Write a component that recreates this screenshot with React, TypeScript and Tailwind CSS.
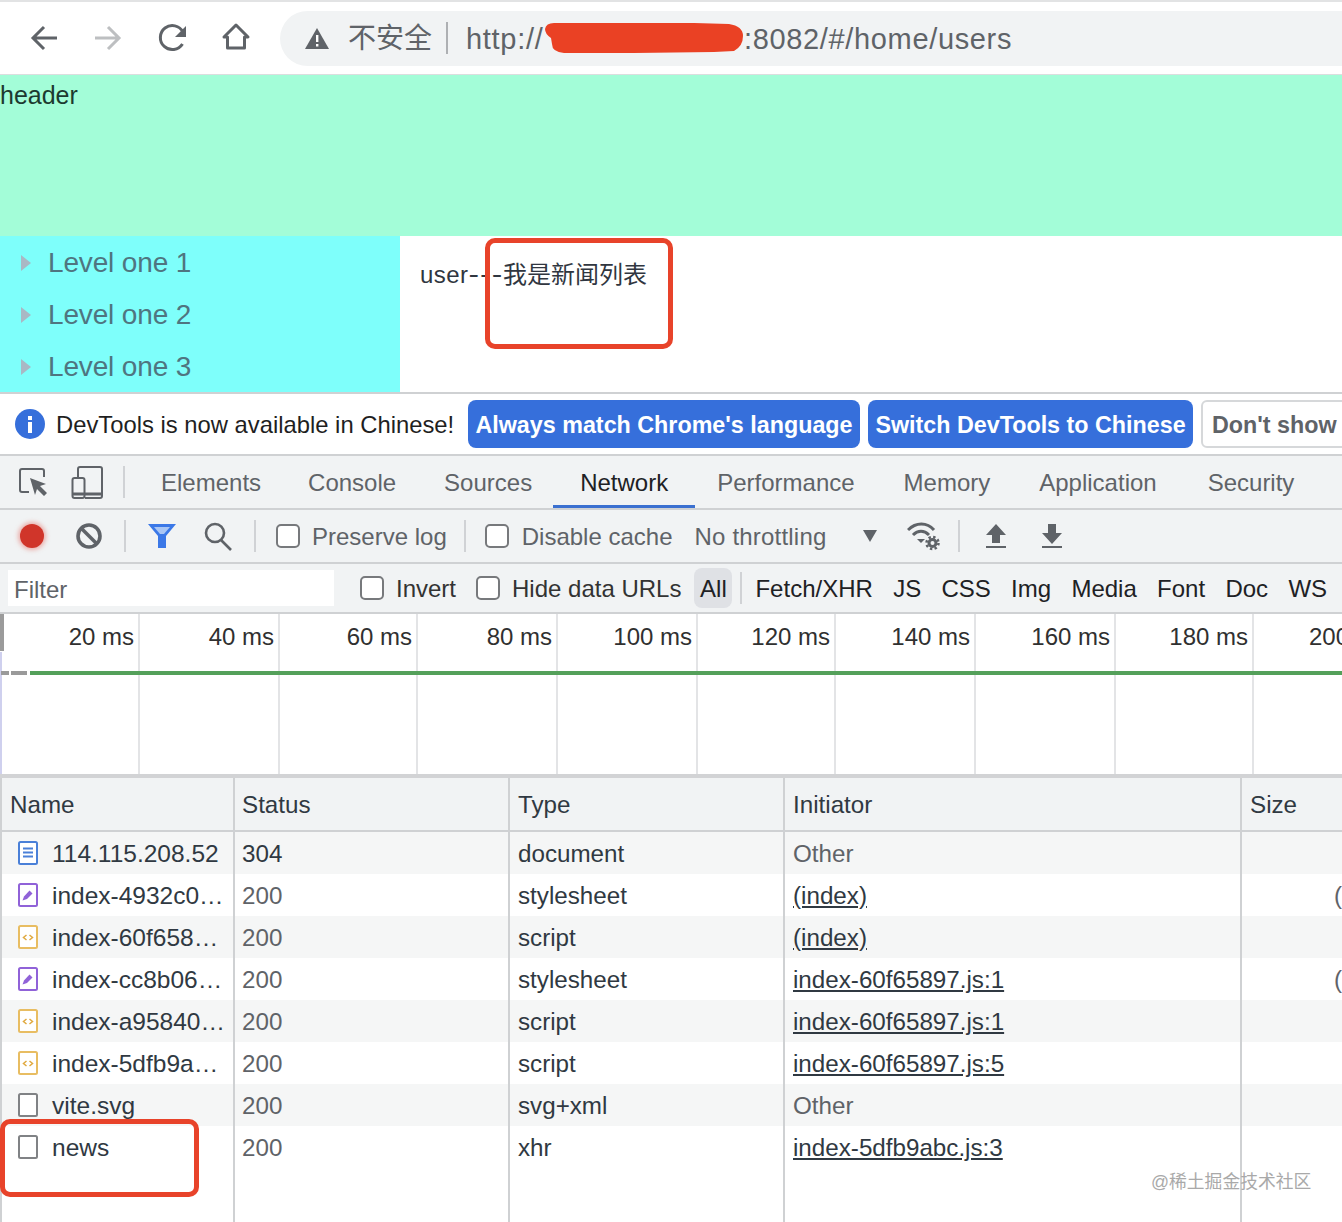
import React from 'react';

const sans = '[font-family:"Liberation_Sans","Noto_Sans_CJK_SC",sans-serif]';

function Sep({ className = '' }: { className?: string }) {
  return <div className={`w-[2px] h-[32px] bg-[#d0d2d5] shrink-0 ${className}`} />;
}

function Check({ className = '' }: { className?: string }) {
  return <div className={`w-[24px] h-[24px] rounded-[5px] border-2 border-[#77797c] bg-white shrink-0 ${className}`} />;
}

function BrowserBar() {
  return (
    <div className="h-[75px] bg-white border-t-2 border-[#e2e3e4] border-b border-b-[#dcdedf] flex items-center overflow-hidden">
      <svg className="ml-[25px] w-[40px] h-[40px] shrink-0" viewBox="0 0 40 40" fill="none" stroke="#5f6368" strokeWidth="3">
        <path d="M32 20H9M19 9L8 20l11 11" />
      </svg>
      <svg className="ml-[23px] w-[40px] h-[40px] shrink-0" viewBox="0 0 40 40" fill="none" stroke="#bdbfc1" strokeWidth="3">
        <path d="M7 20h23M20 9l11 11-11 11" />
      </svg>
      <svg className="ml-[25px] w-[40px] h-[40px] shrink-0" viewBox="0 0 40 40" fill="none">
        <path d="M29.500 26a12 12 0 1 1 .5-12" stroke="#5f6368" strokeWidth="3" />
        <path d="M33 8v11H22z" fill="#5f6368" />
      </svg>
      <svg className="ml-[23px] w-[40px] h-[40px] shrink-0" viewBox="0 0 40 40" fill="none" stroke="#5f6368" strokeWidth="3">
        <path d="M11.500 30V19H8L20 7l12 12h-3.500v11z" strokeLinejoin="round" />
      </svg>
      <div className="ml-[24px] flex-1 h-[55px] bg-[#f1f3f4] rounded-l-[28px] flex items-center pl-[24px] whitespace-nowrap">
        <svg className="w-[26px] h-[24px] shrink-0" viewBox="0 0 26 24">
          <path d="M13 2L25 23H1z" fill="#5f6368" />
          <path d="M12 9h2.400v7H12zM12 18h2.400v2.400H12z" fill="#fff" />
        </svg>
        <span className="ml-[18px] pt-[2px] text-[28px] leading-none text-[#5f6368]">不安全</span>
        <div className="ml-[14px] w-[2px] h-[32px] bg-[#aeb0b3] shrink-0" />
        <span className="ml-[18px] pt-[2px] w-[278px] shrink-0 text-[29px] leading-none text-[#5f6368] tracking-[0.7px]">http://</span>
        <span className="pt-[2px] text-[29px] leading-none text-[#5f6368] tracking-[0.65px]">:8082/#/home/users</span>
      </div>
    </div>
  );
}

function Page() {
  return (
    <>
      <div className="h-[161px] bg-[#a3fdd8] text-[25px] leading-[40px] text-[#1c3a30]">header</div>
      <div className="h-[156px] flex bg-white">
        <div className="w-[400px] bg-[#7efffb] pt-[1px]">
          {['Level one 1', 'Level one 2', 'Level one 3'].map((t) => (
            <div key={t} className="h-[52px] flex items-center pl-[21px] text-[#4f7580]">
              <div className="w-0 h-0 border-y-[8px] border-y-transparent border-l-[10px] border-l-[#a9b8c4]" />
              <span className="ml-[17px] text-[28px] tracking-[-0.15px]">{t}</span>
            </div>
          ))}
        </div>
        <div className="pl-[20px] pt-[21px] text-[24px] leading-[36px] text-[#303640] whitespace-nowrap">
          <span className="tracking-[0.4px]">user</span>
          <span className="font-['Inter'] tracking-[0.5px]">---</span>我是新闻列表
        </div>
      </div>
    </>
  );
}

function Banner() {
  const btn = 'h-[48px] rounded-[8px] bg-[#366fdb] text-white font-bold text-[23.300px] flex items-center justify-center shrink-0 whitespace-nowrap';
  return (
    <div className="h-[64px] bg-white border-t-2 border-b-2 border-[#cfd1d3] flex items-center overflow-hidden">
      <div className="ml-[15px] w-[30px] h-[30px] rounded-full bg-[#366fdb] flex flex-col items-center justify-center gap-[2px] shrink-0">
        <div className="w-[4px] h-[4px] bg-white" />
        <div className="w-[4px] h-[11px] bg-white" />
      </div>
      <span className="ml-[11px] w-[412px] pt-[2px] shrink-0 text-[23.800px] text-[#1f1f1f] whitespace-nowrap">DevTools is now available in Chinese!</span>
      <div className={`w-[392px] ${btn}`}><span className="pt-[2px]">Always match Chrome's language</span></div>
      <div className={`ml-[8px] w-[325px] ${btn}`}><span className="pt-[2px]">Switch DevTools to Chinese</span></div>
      <div className="ml-[8px] pl-[9px] h-[48px] w-[160px] rounded-[6px] border-2 border-[#d6d8da] text-[23.300px] font-bold text-[#5f6368] flex items-center whitespace-nowrap shrink-0"><span className="pt-[2px]">Don't show</span></div>
    </div>
  );
}

function Tabs() {
  const tabs: [string, string][] = [
    ['Elements', 'pt-[2px]'],
    ['Console', 'pt-[2px] ml-[47px]'],
    ['Sources', 'pt-[2px] ml-[48px]'],
    ['Network', 'pt-[5px] ml-[21px] px-[27px] text-[#202124] border-b-[3px] border-[#3b70d0]'],
    ['Performance', 'pt-[2px] ml-[22px]'],
    ['Memory', 'pt-[2px] ml-[49px]'],
    ['Application', 'pt-[2px] ml-[49px]'],
    ['Security', 'pt-[2px] ml-[51px]'],
  ];
  return (
    <div className="h-[54px] bg-[#f1f3f4] border-b-2 border-[#cfd1d3] flex items-center overflow-hidden">
      <svg className="ml-[19px] w-[30px] h-[32px] shrink-0" viewBox="0 0 30 32" fill="none">
        <path d="M10 26H3a2 2 0 0 1-2-2V5a2 2 0 0 1 2-2h20a2 2 0 0 1 2 2v6" stroke="#5f6368" strokeWidth="2" />
        <path d="M11 12l16 6-6 2 7 7-3 3-7-7-2 6z" fill="#5f6368" />
      </svg>
      <svg className="ml-[22px] w-[32px] h-[34px] shrink-0" viewBox="0 0 32 34" fill="none" stroke="#5f6368" strokeWidth="2">
        <path d="M7 13V4a2 2 0 0 1 2-2h20a2 2 0 0 1 2 2v27a2 2 0 0 1-2 2H14" />
        <rect x="1.500" y="13" width="12" height="20" rx="2" />
        <path d="M2 29h11M14 29h17" strokeWidth="3" />
      </svg>
      <Sep className="ml-[20px]" />
      <div className="flex h-full ml-[36px] whitespace-nowrap text-[24px] text-[#5f6368]">
        {tabs.map(([t, cls]) => (
          <div key={t} className={`h-[52px] flex items-center shrink-0 ${cls}`}>
            {t}
          </div>
        ))}
      </div>
    </div>
  );
}

function Toolbar() {
  return (
    <div className="h-[54px] bg-[#f1f3f4] border-b-2 border-[#cfd1d3] flex items-center overflow-hidden text-[24px] text-[#5f6368] whitespace-nowrap">
      <div className="ml-[20px] w-[24px] h-[24px] rounded-full bg-[#d0352a] shadow-[0_0_4px_2px_rgba(230,110,100,0.5)] shrink-0" />
      <svg className="ml-[31px] w-[28px] h-[28px] shrink-0" viewBox="0 0 28 28" fill="none" stroke="#5f6368" strokeWidth="3.600">
        <circle cx="14" cy="14" r="11" />
        <path d="M6 6l16 16" />
      </svg>
      <Sep className="ml-[21px]" />
      <svg className="ml-[21px] w-[30px] h-[26px] shrink-0" viewBox="0 0 30 26">
        <path d="M1 1h28L19 13v12h-8V13z" fill="#3b78e7" />
        <path d="M7 4h16l-6 7h-4z" fill="#a9c6f5" />
      </svg>
      <svg className="ml-[27px] w-[28px] h-[30px] shrink-0" viewBox="0 0 28 30" fill="none" stroke="#5f6368" strokeWidth="2.600">
        <circle cx="11" cy="12" r="9" />
        <path d="M17 19l10 10" />
      </svg>
      <Sep className="ml-[22px]" />
      <Check className="ml-[20px]" />
      <span className="ml-[12px] pt-[2px]">Preserve log</span>
      <Sep className="ml-[17px]" />
      <Check className="ml-[19px]" />
      <span className="ml-[13px] pt-[2px]">Disable cache</span>
      <span className="ml-[22px] pt-[2px] tracking-[0.2px]">No throttling</span>
      <div className="ml-[37px] w-0 h-0 border-x-[7px] border-x-transparent border-t-[12px] border-t-[#5f6368] shrink-0" />
      <svg className="ml-[30px] w-[34px] h-[30px] shrink-0" viewBox="0 0 34 30" fill="none">
        <path d="M1 9c8-8 19-8 26 0M6 14c5-5 11-5 16 0" stroke="#5f6368" strokeWidth="3" />
        <path d="M10 18h8l-4 4z" fill="#5f6368" />
        <circle cx="25.500" cy="22" r="3.500" stroke="#5f6368" strokeWidth="3" />
        <circle cx="25.500" cy="22" r="6" stroke="#5f6368" strokeWidth="2.500" strokeDasharray="2.400 2.300" />
      </svg>
      <Sep className="ml-[17px]" />
      <svg className="ml-[25px] w-[22px] h-[26px] shrink-0" viewBox="0 0 22 26" fill="#5f6368">
        <path d="M11 1l10 11h-6v8H7v-8H1zM1 23h20v2H1z" />
      </svg>
      <svg className="ml-[34px] w-[22px] h-[26px] shrink-0" viewBox="0 0 22 26" fill="#5f6368">
        <path d="M7 1h8v9h6L11 21 1 10h6zM1 23h20v2H1z" />
      </svg>
    </div>
  );
}

function FilterBar() {
  const types = ['Fetch/XHR', 'JS', 'CSS', 'Img', 'Media', 'Font', 'Doc', 'WS'];
  return (
    <div className="h-[50px] bg-[#f1f3f4] border-b-2 border-[#cfd1d3] flex items-center overflow-hidden text-[24px] text-[#202124] whitespace-nowrap">
      <div className="ml-[8px] w-[326px] h-[36px] bg-white text-[#5f6368] pl-[6px] leading-[40px] shrink-0">Filter</div>
      <Check className="ml-[26px]" />
      <span className="ml-[12px] pt-[2px] text-[#333]">Invert</span>
      <Check className="ml-[20px]" />
      <span className="ml-[12px] pt-[2px] text-[#333]">Hide data URLs</span>
      <div className="ml-[13px] w-[38px] h-[40px] rounded-[8px] bg-[#dfe1e5] flex items-center justify-center shrink-0 pt-[2px]">All</div>
      <Sep className="ml-[8px]" />
      <div className="flex ml-[13px] gap-[20.300px] pt-[2px]">
        {types.map((t) => (
          <span key={t}>{t}</span>
        ))}
      </div>
    </div>
  );
}

function Timeline() {
  const ticks: [string, number][] = [
    ['20 ms', 140], ['40 ms', 140], ['60 ms', 138], ['80 ms', 140], ['100 ms', 140],
    ['120 ms', 138], ['140 ms', 140], ['160 ms', 140], ['180 ms', 138],
  ];
  return (
    <div className="h-[164px] bg-white border-b-[4px] border-[#d2d3d5] flex relative overflow-hidden text-[24px] text-[#303030] whitespace-nowrap">
      {ticks.map(([t, w]) => (
        <div key={t} className="h-full border-r-2 border-[#e3e4e6] text-right pr-[4px] leading-[46px] shrink-0" style={{ width: w }}>{t}</div>
      ))}
      <div className="pl-[55px] leading-[46px]">200 ms</div>
      {/* overview marks */}
      <div className="absolute left-0 top-0 w-[4px] h-[37px] bg-[#9b9b9b]" />
      <div className="absolute left-0 top-[38px] bottom-0 w-[2px] bg-[#cfd0ee]" />
      <div className="absolute left-[1px] top-[57px] w-[8px] h-[4px] bg-[#9a9a9a]" />
      <div className="absolute left-[11px] top-[57px] w-[16px] h-[4px] bg-[#9a9a9a]" />
      <div className="absolute left-[30px] right-0 top-[57px] h-[4px] bg-[#54a05a]" />
    </div>
  );
}

type Row = { icon: 'doc' | 'css' | 'js' | 'blank'; name: string; status: string; type: string; init: string; size?: string };

const rows: Row[] = [
  { icon: 'doc', name: '114.115.208.52', status: '304', type: 'document', init: 'Other' },
  { icon: 'css', name: 'index-4932c0…', status: '200', type: 'stylesheet', init: '(index)', size: '(' },
  { icon: 'js', name: 'index-60f658…', status: '200', type: 'script', init: '(index)' },
  { icon: 'css', name: 'index-cc8b06…', status: '200', type: 'stylesheet', init: 'index-60f65897.js:1', size: '(' },
  { icon: 'js', name: 'index-a95840…', status: '200', type: 'script', init: 'index-60f65897.js:1' },
  { icon: 'js', name: 'index-5dfb9a…', status: '200', type: 'script', init: 'index-60f65897.js:5' },
  { icon: 'blank', name: 'vite.svg', status: '200', type: 'svg+xml', init: 'Other' },
  { icon: 'blank', name: 'news', status: '200', type: 'xhr', init: 'index-5dfb9abc.js:3' },
];

function FileIcon({ kind }: { kind: Row['icon'] }) {
  if (kind === 'doc') {
    return (
      <svg className="w-[20px] h-[24px] shrink-0" viewBox="0 0 20 24" fill="none">
        <rect x="1" y="1" width="18" height="22" rx="1.500" fill="#fff" stroke="#4a80d8" strokeWidth="2" />
        <path d="M5 7.500h10M5 11.500h10M5 15.500h10" stroke="#4a80d8" strokeWidth="2" />
      </svg>
    );
  }
  if (kind === 'css') {
    return (
      <svg className="w-[20px] h-[24px] shrink-0" viewBox="0 0 20 24" fill="none">
        <rect x="1" y="1" width="18" height="22" rx="1.500" fill="#fff" stroke="#9062d8" strokeWidth="2" />
        <path d="M4.500 17.500l1.500-4 5.500-6 3 3-5.500 5.500z" fill="#9062d8" />
      </svg>
    );
  }
  if (kind === 'js') {
    return (
      <svg className="w-[20px] h-[24px] shrink-0" viewBox="0 0 20 24" fill="none">
        <rect x="1" y="1" width="18" height="22" rx="1.500" fill="#fff" stroke="#e8bd62" strokeWidth="2" />
        <path d="M8.500 10l-3 2.500 3 2.500M11.500 10l3 2.500-3 2.500" stroke="#e0a93f" strokeWidth="1.500" />
      </svg>
    );
  }
  return (
    <svg className="w-[20px] h-[24px] shrink-0" viewBox="0 0 20 24" fill="none">
      <rect x="1" y="1" width="18" height="22" rx="1.500" fill="#fff" stroke="#808285" strokeWidth="2" />
    </svg>
  );
}

function Table() {
  const col = 'border-r-2 border-[#cfd1d3] shrink-0 overflow-hidden whitespace-nowrap';
  return (
    <div className="text-[24.200px] text-[#303942] flex-1 flex flex-col border-l-2 border-[#cfd1d3] relative">
      <div className="h-[54px] bg-[#f1f3f4] border-b-2 border-[#cfd1d3] flex leading-[54px]">
        <div className={`${col} w-[233px] pl-[8px]`}>Name</div>
        <div className={`${col} w-[275px] pl-[7px]`}>Status</div>
        <div className={`${col} w-[275px] pl-[8px]`}>Type</div>
        <div className={`${col} w-[457px] pl-[8px]`}>Initiator</div>
        <div className="pl-[8px]">Size</div>
      </div>
      {rows.map((r, i) => (
        <div key={r.name} className={`h-[42px] flex leading-[44px] ${i % 2 === 0 ? 'bg-[#f5f6f6]' : 'bg-white'}`}>
          <div className={`${col} w-[233px] pl-[16px] flex items-center`}>
            <FileIcon kind={r.icon} />
            <span className="ml-[14px] pt-[2px] text-[24.500px]">{r.name}</span>
          </div>
          <div className={`${col} w-[275px] pl-[7px] ${r.status === '304' ? '' : 'text-[#5f6368]'}`}>{r.status}</div>
          <div className={`${col} w-[275px] pl-[8px]`}>{r.type}</div>
          <div className={`${col} w-[457px] pl-[8px] ${r.init === 'Other' ? 'text-[#5f6368]' : 'underline'}`}>{r.init}</div>
          <div className="flex-1 text-right text-[#5f6368] overflow-hidden">{r.size}</div>
        </div>
      ))}
      <div className="flex flex-1">
        <div className={`${col} w-[233px]`} />
        <div className={`${col} w-[275px]`} />
        <div className={`${col} w-[275px]`} />
        <div className={`${col} w-[457px]`} />
      </div>
    </div>
  );
}

export default function App() {
  return (
    <div className={`w-[1342px] h-[1222px] overflow-hidden relative flex flex-col bg-white ${sans}`}>
      <BrowserBar />
      <Page />
      <Banner />
      <Tabs />
      <Toolbar />
      <FilterBar />
      <Timeline />
      <Table />

      {/* annotations on the screenshot */}
      <svg className="absolute left-[544px] top-[22px] w-[202px] h-[32px]" viewBox="0 0 202 32">
        <path d="M1 7Q2 1 10 1L150 1 185 2Q199 4 199 14 199 24 190 29L170 30 90 31 20 31Q8 30 8 22L7 16Q1 12 1 7z" fill="#ea4124" />
      </svg>
      <div className="absolute left-[485px] top-[238px] w-[188px] h-[111px] border-[5px] border-[#e8432a] rounded-[10px]" />
      <div className="absolute left-0 top-[1119px] w-[199px] h-[78px] border-[5px] border-[#e8432a] rounded-[10px]" />
      <div className="absolute left-[1151px] top-[1170px] text-[17.800px] leading-[24px] text-[#a9a9a9] whitespace-nowrap">@稀土掘金技术社区</div>
    </div>
  );
}
